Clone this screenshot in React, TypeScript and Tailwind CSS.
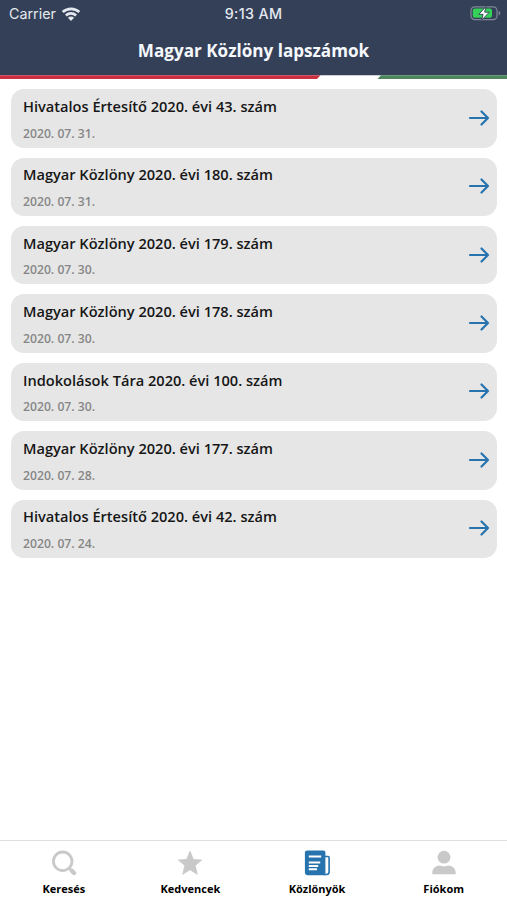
import type { ReactNode } from "react"

type Issue = { title: string; date: string }

const ISSUES: Issue[] = [
  { title: "Hivatalos Értesítő 2020. évi 43. szám", date: "2020. 07. 31." },
  { title: "Magyar Közlöny 2020. évi 180. szám", date: "2020. 07. 31." },
  { title: "Magyar Közlöny 2020. évi 179. szám", date: "2020. 07. 30." },
  { title: "Magyar Közlöny 2020. évi 178. szám", date: "2020. 07. 30." },
  { title: "Indokolások Tára 2020. évi 100. szám", date: "2020. 07. 30." },
  { title: "Magyar Közlöny 2020. évi 177. szám", date: "2020. 07. 28." },
  { title: "Hivatalos Értesítő 2020. évi 42. szám", date: "2020. 07. 24." },
]

const WifiIcon = () => (
  <svg className="h-[15px] w-5" viewBox="0 0 20 15" fill="none" stroke="currentColor" strokeWidth="2.7">
    <path d="M1.7 5.1C6.4.7 13.6.7 18.3 5.1" />
    <path d="M4.9 8.4C7.8 5.7 12.2 5.7 15.1 8.4" />
    <path d="M10 13.9 6.9 10.8C8.6 9.2 11.4 9.2 13.1 10.8Z" fill="currentColor" stroke="none" />
  </svg>
)

const BatteryIcon = () => (
  <svg className="h-[15px] w-[31px]" viewBox="0 0 31 15" fill="none">
    <rect x="1" y=".8" width="26" height="12.8" rx="3.8" stroke="#808898" strokeWidth="1.2" />
    <path d="M28.7 5v4.4c1-.4 1.6-1.2 1.6-2.2s-.6-1.8-1.6-2.2Z" fill="#808898" />
    <rect x="2.8" y="2.6" width="19.2" height="9.2" rx="2" fill="#34d058" />
    <path d="M16.2.4 8.8 8.3h4.3l-1.4 5.9L19.2 6.2h-4.6Z" fill="#fff" stroke="#344057" strokeWidth=".9" />
  </svg>
)

const ArrowIcon = () => (
  <svg
    className="mb-px h-4 w-[22px] text-[#2673ae]"
    viewBox="0 0 22 16"
    fill="none"
    stroke="currentColor"
    strokeWidth="2.2"
    strokeLinecap="round"
    strokeLinejoin="round"
  >
    <path d="M2 8h18M13.5 1.5 20 8l-6.5 6.5" />
  </svg>
)

const SearchIcon = () => (
  <svg className="size-[26px]" viewBox="0 0 26 26" fill="none" stroke="currentColor">
    <circle cx="11.7" cy="11.3" r="9.3" strokeWidth="2.8" />
    <path d="m18.3 18.3 2 2" strokeWidth="2.4" />
    <path d="m20.8 20.8 2.2 2.2" strokeWidth="4.4" strokeLinecap="round" />
  </svg>
)

const StarIcon = () => (
  <svg className="size-[26px]" viewBox="0 0 26 26" fill="currentColor" stroke="currentColor" strokeLinejoin="round">
    <path d="m13 1.2 3.4 8.2 8.3.6-6.5 5.5 2.1 8.8-7.3-4.6-7.3 4.6 2.1-8.8L1.3 10l8.3-.6Z" strokeWidth=".8" />
  </svg>
)

const NewsIcon = () => (
  <svg className="size-[26px]" viewBox="0 0 26 26" fill="none">
    <path d="M3.3.6h15.9c1.3 0 2.2.9 2.2 2.2v22.4H3.6c-1.6 0-2.7-1.1-2.7-2.7V2.8C.9 1.5 2 .6 3.3.6Z" fill="currentColor" />
    <path d="M21 6.5h3.1c.6 0 1 .4 1 1v14.2c0 1.6-1.1 2.8-2.7 2.8h-2.2" stroke="currentColor" strokeWidth="1.6" />
    <path d="M4.8 6.5h12.4M4.8 12.4h11.4M4.8 15.9h9.4M4.8 19.3h8.2" stroke="#fff" strokeWidth="2" />
  </svg>
)

const UserIcon = () => (
  <svg className="size-[26px]" viewBox="0 0 26 26" fill="currentColor">
    <circle cx="13" cy="7.2" r="6.4" />
    <path d="M1.3 24.2v-1.4c0-4.6 3.6-7.4 7.7-7.4 1.4.6 2.6.9 4 .9s2.6-.3 4-.9c4.1 0 7.7 2.8 7.7 7.4v1.4Z" />
  </svg>
)

type TabProps = { label: string; icon: ReactNode; active?: boolean }

const Tab = ({ label, icon, active = false }: TabProps) => (
  <button type="button" className="flex flex-1 flex-col items-center pt-[9px]">
    <span className={active ? "text-[#2673ae]" : "text-[#c9c9c9]"}>{icon}</span>
    <span className="mt-[5px] text-[11px] leading-4 font-bold text-black">{label}</span>
  </button>
)

const IssueCard = ({ title, date }: Issue) => (
  <li className="flex h-[58.4px] items-center justify-between rounded-[13px] bg-[#e6e6e6] pr-[7px] pl-[12.5px]">
    <div className="flex flex-col pt-[2px]">
      <span className="text-[14.6px] leading-5 font-semibold whitespace-nowrap text-[#161616]">{title}</span>
      <span className="mt-[8.6px] text-[12.2px] leading-[18px] font-semibold text-[#868686]">{date}</span>
    </div>
    <ArrowIcon />
  </li>
)

export default function App() {
  return (
    <div className="flex h-[900px] w-[507px] flex-col overflow-hidden bg-white font-['Open_Sans','Noto_Sans',sans-serif]">
      <header className="h-[75px] shrink-0 bg-[#344057] text-white">
        {/* Status bar */}
        <div className="grid h-7 grid-cols-3 items-center pr-[6px] pl-[9px] font-['Inter',sans-serif] text-[14.3px] text-[#e4e8ef]">
          <div className="flex items-center gap-[5px]">
            <span>Carrier</span>
            <WifiIcon />
          </div>
          <span className="pr-[3px] text-center font-medium tracking-[0.35px]">9:13 AM</span>
          <div className="flex justify-end pb-px">
            <BatteryIcon />
          </div>
        </div>
        <h1 className="mt-[11px] text-center text-[17.1px] leading-6 font-bold text-[#f5f8fc]">
          Magyar Közlöny lapszámok
        </h1>
      </header>

      {/* Tricolour stripe */}
      <svg className="h-1 w-full shrink-0" viewBox="0 0 507 4">
        <path d="M0 0h507v.3H0Z" fill="#344057" />
        <path d="M0 .3h320.5L317 4H0Z" fill="#cb3040" />
        <path d="M381 .3h126V4H377.5Z" fill="#4b875b" />
      </svg>

      <main className="flex-1 px-[10.5px] pt-[10.2px]">
        <ul className="flex flex-col gap-[10px]">
          {ISSUES.map((issue) => (
            <IssueCard key={issue.title} {...issue} />
          ))}
        </ul>
      </main>

      <nav className="flex h-[60px] shrink-0 items-start border-t border-[#dedede] bg-white pl-[0.5px]">
        <Tab label="Keresés" icon={<SearchIcon />} />
        <Tab label="Kedvencek" icon={<StarIcon />} />
        <Tab label="Közlönyök" icon={<NewsIcon />} active />
        <Tab label="Fiókom" icon={<UserIcon />} />
      </nav>
    </div>
  )
}
